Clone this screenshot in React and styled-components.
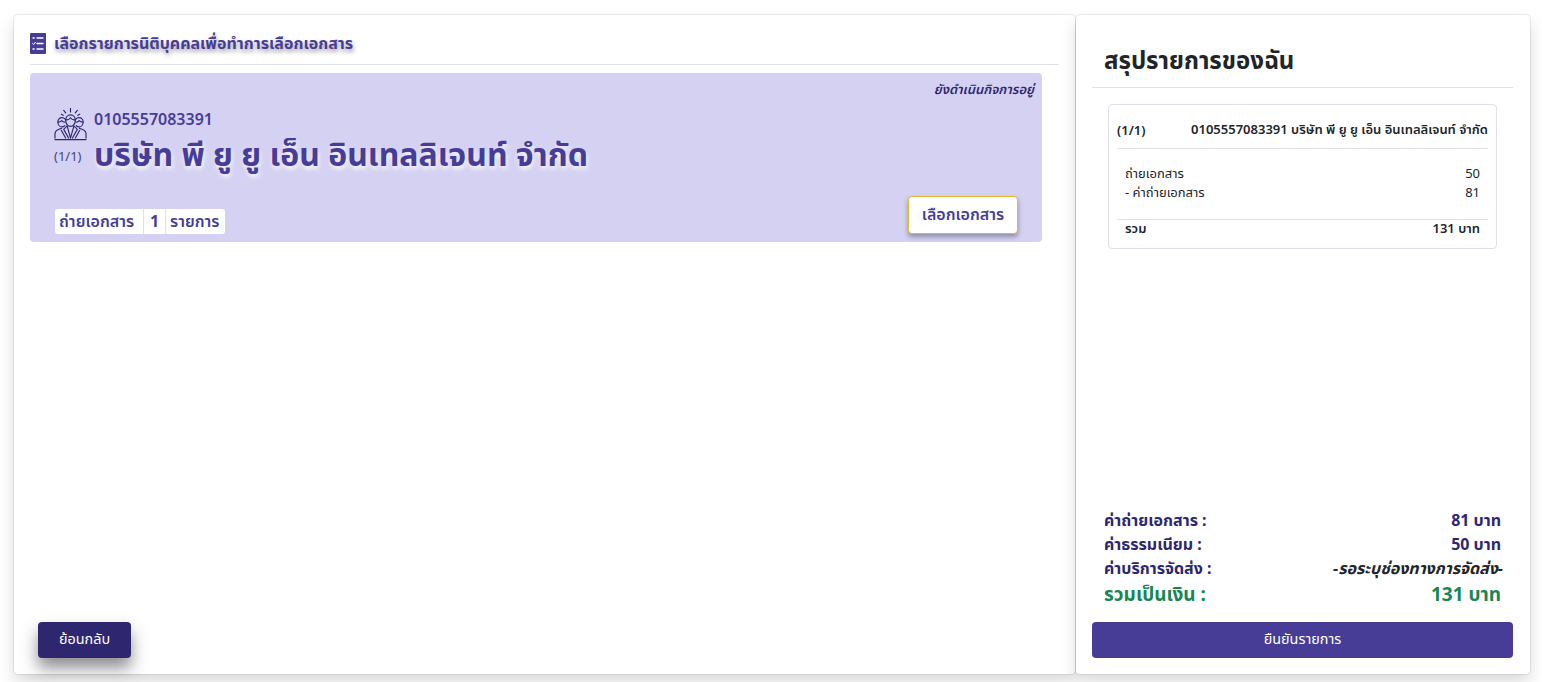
import styled, { createGlobalStyle } from "styled-components"

const GlobalStyle = createGlobalStyle`
html, body {
  margin: 0;
  padding: 0;
  background: #fff;
  font-family: "Noto Sans", "Noto Sans Thai", "Open Sans", sans-serif;
  overflow: hidden;
}
* { box-sizing: border-box; }
`

const ListIcon = () => (
    <IconBox>
        <svg width="16" height="21" viewBox="0 0 16 21">
            <rect width="16" height="21" rx="1" fill="#483D96" />
            <g stroke="#fff" strokeWidth="1.3" fill="none" strokeLinecap="round">
                <path d="M7 5h6M7 10.500h6M7 16h6" />
                <path d="M3 5h1.200M3 16h1.200" />
                <path d="M2.600 10.500l1 1 1.800-2.200" strokeWidth="1" />
            </g>
        </svg>
    </IconBox>
)

const PeopleIcon = () => (
    <svg width="33" height="33" viewBox="0 0 34 34" fill="none" stroke="#2E2770" strokeWidth="1.2" strokeLinecap="round" strokeLinejoin="round">
        <path d="M17 0.500v3.500M10 2.500l2 2.500M24 2.500l-2 2.500M7.500 6.500l2 1M26.500 6.500l-2 1" />
        <path d="M12 12.500c0-3.200 2.200-5.500 5-5.500s5 2.300 5 5.500c0 3.500-2.200 6.500-5 6.500s-5-3-5-6.500z" />
        <path d="M12 12c2 .5 4-.5 5-2 1 1.500 3 2.500 5 2" />
        <path d="M11.500 11.500c-.8-1-2-1.500-3.300-1.500-2.400 0-4.200 1.900-4.200 4.300 0 2.800 1.800 5.200 4.200 5.200 1.100 0 2.100-.5 2.900-1.400" />
        <path d="M22.500 11.500c.8-1 2-1.500 3.300-1.500 2.400 0 4.200 1.900 4.200 4.300 0 2.800-1.800 5.200-4.200 5.200-1.100 0-2.100-.5-2.900-1.400" />
        <path d="M4 14.500c1.500 0 3-.5 4-1.500.8.900 1.800 1.400 3 1.500M30 14.500c-1.500 0-3-.5-4-1.500-.8.900-1.800 1.400-3 1.500" />
        <path d="M1 31v-4c0-2.500 1.500-4 3.500-4.800L8 20.800M33 31v-4c0-2.500-1.500-4-3.500-4.800L26 20.800" />
        <path d="M7.500 23l4.500 8M26.500 23l-4.500 8M13.500 18.500l3.500 12.500 3.500-12.500M13.500 18.500l-3.500 3.500 5 9M20.500 18.500l3.500 3.500-5 9" />
        <path d="M1 32.500h32" />
    </svg>
)

const App = () => {
    return (
        <>
            <GlobalStyle />
            <Page>
                <MainCard>
                    <CardHeading>
                        <ListIcon />
                        <HeadingText>เลือกรายการนิติบุคคลเพื่อทำการเลือกเอกสาร</HeadingText>
                    </CardHeading>
                    <CompanyCard>
                        <StatusText>ยังดำเนินกิจการอยู่</StatusText>
                        <CompanyTop>
                            <IconColumn>
                                <PeopleIcon />
                                <Counter>(1/1)</Counter>
                            </IconColumn>
                            <CompanyInfo>
                                <TaxId>0105557083391</TaxId>
                                <CompanyName>บริษัท พี ยู ยู เอ็น อินเทลลิเจนท์ จำกัด</CompanyName>
                            </CompanyInfo>
                        </CompanyTop>
                        <CompanyBottom>
                            <CountPill>
                                <PillLabel>ถ่ายเอกสาร</PillLabel>
                                <PillCount>1</PillCount>
                                <PillUnit>รายการ</PillUnit>
                            </CountPill>
                            <SelectButton>เลือกเอกสาร</SelectButton>
                        </CompanyBottom>
                    </CompanyCard>
                    <Footer>
                        <BackButton>ย้อนกลับ</BackButton>
                    </Footer>
                </MainCard>
                <SummaryCard>
                    <SummaryTitle>สรุปรายการของฉัน</SummaryTitle>
                    <ReceiptWrap>
                        <Receipt>
                            <ReceiptHead>
                                <span>(1/1)</span>
                                <span>0105557083391 บริษัท พี ยู ยู เอ็น อินเทลลิเจนท์ จำกัด</span>
                            </ReceiptHead>
                            <ReceiptLines>
                                <ReceiptRow><span>ถ่ายเอกสาร</span><span>50</span></ReceiptRow>
                                <ReceiptRow><span>- ค่าถ่ายเอกสาร</span><span>81</span></ReceiptRow>
                            </ReceiptLines>
                            <ReceiptTotal><span>รวม</span><span>131 บาท</span></ReceiptTotal>
                        </Receipt>
                    </ReceiptWrap>
                    <Totals>
                        <TotalRow><span>ค่าถ่ายเอกสาร :</span><span>81 บาท</span></TotalRow>
                        <TotalRow><span>ค่าธรรมเนียม :</span><span>50 บาท</span></TotalRow>
                        <TotalRow><span>ค่าบริการจัดส่ง :</span><Pending>-รอระบุช่องทางการจัดส่ง-</Pending></TotalRow>
                        <GrandRow><span>รวมเป็นเงิน :</span><span>131 บาท</span></GrandRow>
                    </Totals>
                    <ConfirmButton>ยืนยันรายการ</ConfirmButton>
                </SummaryCard>
            </Page>
        </>
    )
}

export default App

const Page = styled.div`
width: 1542px;
height: 682px;
padding: 15px 12px 8px 14px;
display: flex;
gap: 1px;
`

const MainCard = styled.div`
width: 1061px;
height: 659px;
background: #fff;
border-radius: 4px;
box-shadow: 0 0 0 1px rgba(0, 0, 0, 0.07), 0 8px 16px rgba(0, 0, 0, 0.15);
padding: 16px;
display: flex;
flex-direction: column;
`

const CardHeading = styled.div`
height: 34px;
display: flex;
align-items: flex-start;
gap: 8px;
border-bottom: 1px solid #E0E0EA;
`

const IconBox = styled.div`
height: 21px;
display: flex;
margin-top: 2px;
`

const HeadingText = styled.div`
color: #483D96;
font-size: 16px;
font-weight: 700;
line-height: 24px;
text-shadow: 1px 3px 4px rgba(40, 40, 60, 0.45);
`

const CompanyCard = styled.div`
position: relative;
width: 1012px;
height: 169px;
margin-top: 8px;
background: #D4D1F2;
border-radius: 4px;
padding: 33px 24px 8px 24px;
display: flex;
flex-direction: column;
`

const StatusText = styled.div`
position: absolute;
top: 7px;
right: 8px;
color: #2E2770;
font-size: 13px;
font-weight: 600;
font-style: italic;
line-height: 18px;
`

const CompanyTop = styled.div`
display: flex;
gap: 13px;
`

const IconColumn = styled.div`
display: flex;
flex-direction: column;
align-items: flex-start;
width: 27px;
padding-top: 2px;
`

const Counter = styled.div`
color: #4A4580;
font-size: 13px;
line-height: 16px;
margin-top: 7px;
white-space: nowrap;
`

const CompanyInfo = styled.div`
display: flex;
flex-direction: column;
`

const TaxId = styled.div`
color: #483D96;
font-size: 16px;
font-weight: 600;
line-height: 26px;
`

const CompanyName = styled.div`
color: #483D96;
font-size: 32px;
font-weight: 700;
line-height: 48px;
margin-top: -2px;
text-shadow: 1px 3px 5px rgba(255, 255, 255, 0.9);
`

const CompanyBottom = styled.div`
margin-top: auto;
display: flex;
justify-content: space-between;
align-items: flex-end;
`

const CountPill = styled.div`
display: flex;
height: 25px;
background: #fff;
border-radius: 3px;
margin-left: 1px;
`

const PillLabel = styled.div`
color: #483D96;
font-size: 16px;
font-weight: 600;
line-height: 25px;
padding: 0 9px 0 4px;
`

const PillCount = styled(PillLabel)`
width: 23px;
padding: 0;
text-align: center;
font-weight: 700;
border-left: 1px solid #E0E0EA;
border-right: 1px solid #E0E0EA;
`

const PillUnit = styled(PillLabel)`
padding: 0 5px 0 4px;
`

const SelectButton = styled.button`
width: 110px;
height: 38px;
background: #fff;
border: 1px solid #E4B82F;
border-radius: 4px;
color: #483D96;
font-family: inherit;
font-size: 16px;
font-weight: 600;
box-shadow: 0 3px 5px rgba(40, 40, 60, 0.4);
`

const Footer = styled.div`
margin-top: auto;
padding: 0 8px;
`

const BackButton = styled.button`
width: 93px;
height: 36px;
padding: 0 0 2px;
background: #2E2770;
border: none;
border-radius: 4px;
color: #fff;
font-family: inherit;
font-size: 14.4px;
font-weight: 400;
box-shadow: 0 10px 16px rgba(30, 30, 40, 0.5);
`

const SummaryCard = styled.div`
width: 454px;
height: 659px;
background: #fff;
border-radius: 4px;
box-shadow: 0 0 0 1px rgba(0, 0, 0, 0.07), 0 8px 16px rgba(0, 0, 0, 0.15);
padding: 16px 17px 16px 16px;
display: flex;
flex-direction: column;
`

const SummaryTitle = styled.div`
color: #212529;
font-size: 24px;
font-weight: 700;
line-height: 58px;
height: 57px;
padding-left: 12px;
border-bottom: 1px solid #E0E0EA;
`

const ReceiptWrap = styled.div`
padding: 16px 16px 0 16px;
flex: 1;
`

const Receipt = styled.div`
height: 145px;
border: 1px solid #E0E0EA;
border-radius: 4px;
padding: 0 8px;
color: #212529;
`

const ReceiptHead = styled.div`
height: 44px;
padding-top: 7px;
display: flex;
justify-content: space-between;
align-items: center;
font-size: 13px;
font-weight: 600;
border-bottom: 1px solid #E0E0EA;
`

const ReceiptLines = styled.div`
height: 71px;
padding: 15px 8px 0 8px;
border-bottom: 1px solid #E0E0EA;
`

const ReceiptRow = styled.div`
display: flex;
justify-content: space-between;
font-size: 13px;
line-height: 19px;
`

const ReceiptTotal = styled.div`
display: flex;
justify-content: space-between;
padding: 0 8px;
font-size: 13px;
font-weight: 600;
line-height: 17px;
`

const Totals = styled.div`
padding: 0 12px;
margin-bottom: 14px;
`

const TotalRow = styled.div`
display: flex;
justify-content: space-between;
color: #2E2770;
font-size: 16px;
font-weight: 700;
line-height: 24px;
`

const Pending = styled.span`
color: #212529;
font-style: italic;
font-weight: 700;
margin-right: -2px;
`

const GrandRow = styled.div`
display: flex;
justify-content: space-between;
color: #198754;
font-size: 19px;
font-weight: 700;
line-height: 28px;
`

const ConfirmButton = styled.button`
width: 100%;
height: 36px;
padding: 0 0 2px;
background: #483D96;
border: none;
border-radius: 4px;
color: #fff;
font-family: inherit;
font-size: 14.4px;
font-weight: 400;
flex-shrink: 0;
`
